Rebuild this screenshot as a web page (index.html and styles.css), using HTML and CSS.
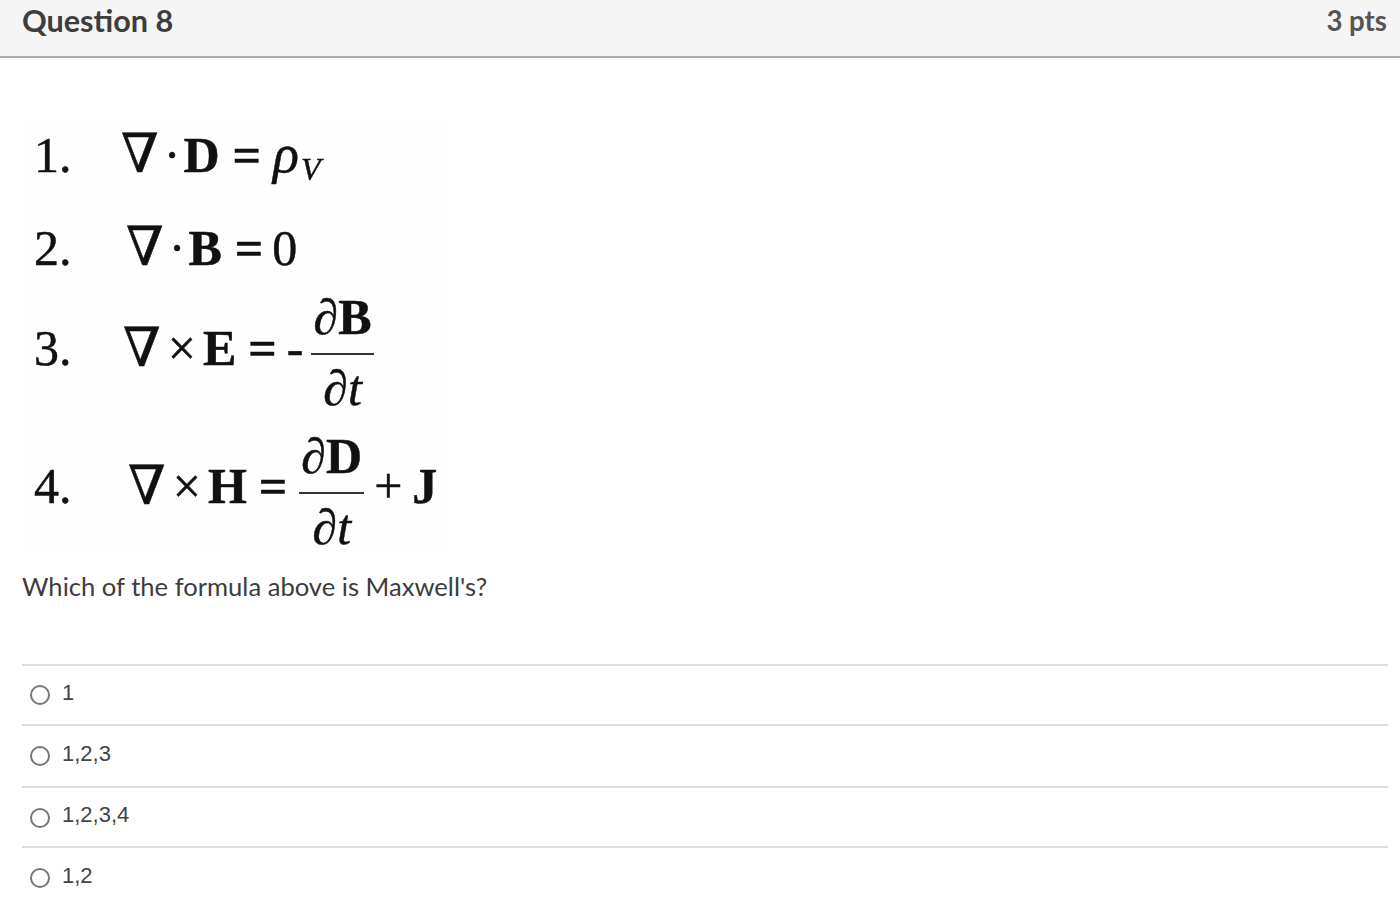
FILE: index.html
```html
<!DOCTYPE html>
<html lang="en">
<head>
<meta charset="utf-8">
<title>Question 8</title>
<link rel="stylesheet" href="styles.css">
</head>
<body>
<header class="head">
  <h2 class="title">Question 8</h2>
  <div class="pts">3 pts</div>
</header>
<main class="body">
  <div class="formulas">
    <div class="row r1"><span class="n">1.</span><span class="nabla">∇</span><span class="dot">·</span><b>D</b><span class="eq">=</span><i class="rho">ρ</i><i class="sub">V</i></div>
    <div class="row r2"><span class="n">2.</span><span class="nabla">∇</span><span class="dot">·</span><b>B</b><span class="eq">=</span><span class="zero">0</span></div>
    <div class="row r3"><span class="n">3.</span><span class="nabla">∇</span><span class="times">×</span><b>E</b><span class="eq">=</span><span class="minus">-</span>
      <span class="frac"><span class="top">∂<b>B</b></span><span class="bot">∂<i>t</i></span></span></div>
    <div class="row r4"><span class="n">4.</span><span class="nabla">∇</span><span class="times">×</span><b>H</b><span class="eq">=</span>
      <span class="frac"><span class="top">∂<b>D</b></span><span class="bot">∂<i>t</i></span></span><span class="plus">+</span><b>J</b></div>
  </div>
  <p class="prompt">Which of the formula above is Maxwell's?</p>
  <ul class="answers">
    <li class="answer a1"><span class="radio"></span><span class="label">1</span></li>
    <li class="answer a2"><span class="radio"></span><span class="label">1,2,3</span></li>
    <li class="answer a3"><span class="radio"></span><span class="label">1,2,3,4</span></li>
    <li class="answer a4"><span class="radio"></span><span class="label">1,2</span></li>
  </ul>
</main>
</body>
</html>
```
FILE: styles.css
```css
* { box-sizing: border-box; }
html, body { margin: 0; padding: 0; background: #fff; }
body { height: 912px; overflow: hidden; font-family: Lato, "Liberation Sans", sans-serif; color: #2d3b45; }

.head { height: 58px; background: #f5f5f5; border-bottom: 2px solid #aaa; display: flex; justify-content: space-between; align-items: flex-start; padding: 0 13px 0 22px; }
.title { margin: 3px 0 0; font-size: 30.6px; line-height: 36px; font-weight: 700; color: #3d3d3d; }
.pts { margin-top: 3px; font-size: 27.6px; line-height: 36px; font-weight: 700; color: #555; }

.body { padding: 0 12px 0 22px; }

.formulas { width: 424px; height: 428px; margin-top: 64px; background: #fefefe; display: flex; flex-direction: column; font-family: "Liberation Serif", "DejaVu Serif", serif; font-size: 50px; color: #111; filter: blur(.5px); -webkit-text-stroke: .5px #111; padding-left: 12px; }
.row { display: flex; align-items: baseline; white-space: nowrap; line-height: 1; }
.r1 { height: 95px; padding-top: 5px; }
.r2 { height: 53px; padding-top: 3px; }
.r3 { height: 155px; align-items: center; }
.r4 { height: 121px; align-items: center; }
.n { width: 87px; }
.r2 .n { width: 92px; }
.r3 .n { width: 89px; }
.r4 .n { width: 94px; }
.nabla { font-size: 54px; }
.dot { margin: 0 3px 0 5px; }
.eq { margin: 0 12px 0 13px; font-size: 50px; font-weight: 700; }
.r2 .eq { margin: 0 9px 0 13px; }
.r3 .eq, .r4 .eq { margin: 0 10px 0 12px; }
.rho { font-size: 54px; }
.sub { font-size: 32px; margin-left: 2px; transform: translateY(8px); }
.times { margin: 0 7px; font-size: 50px; }
.minus { margin-right: 8px; }
.plus { margin: 0 10px; font-size: 50px; }
.frac { display: inline-flex; flex-direction: column; align-items: center; margin-top: 9px; }
.r4 .frac { margin-top: 11px; margin-left: 2px; }
.top { padding: 0 2px 11px; border-bottom: 2px solid #333; line-height: 50px; }
.bot { padding-top: 8px; line-height: 50px; }

.prompt { margin: 18px 0 0; font-size: 25.6px; line-height: 36px; color: #3d3d3d; }

.answers { list-style: none; margin: 60px 0 0; padding: 0; }
.answer { display: flex; align-items: center; height: 60px; border-top: 2px solid #ddd; padding-left: 8px; }
.a2 { height: 62px; }
.radio { width: 20px; height: 20px; border: 2px solid #777; border-radius: 50%; background: #fff; margin-right: 12px; }
.a1 .radio { margin-top: -1px; }
.a3 .radio, .a4 .radio { margin-top: 2px; }
.label { font-family: "Liberation Sans", Arial, sans-serif; font-size: 22px; color: #444; line-height: 26px; margin-top: -5px; }
.a3 .label { margin-top: -5px; }
.a4 .label { margin-top: -3px; }
```
